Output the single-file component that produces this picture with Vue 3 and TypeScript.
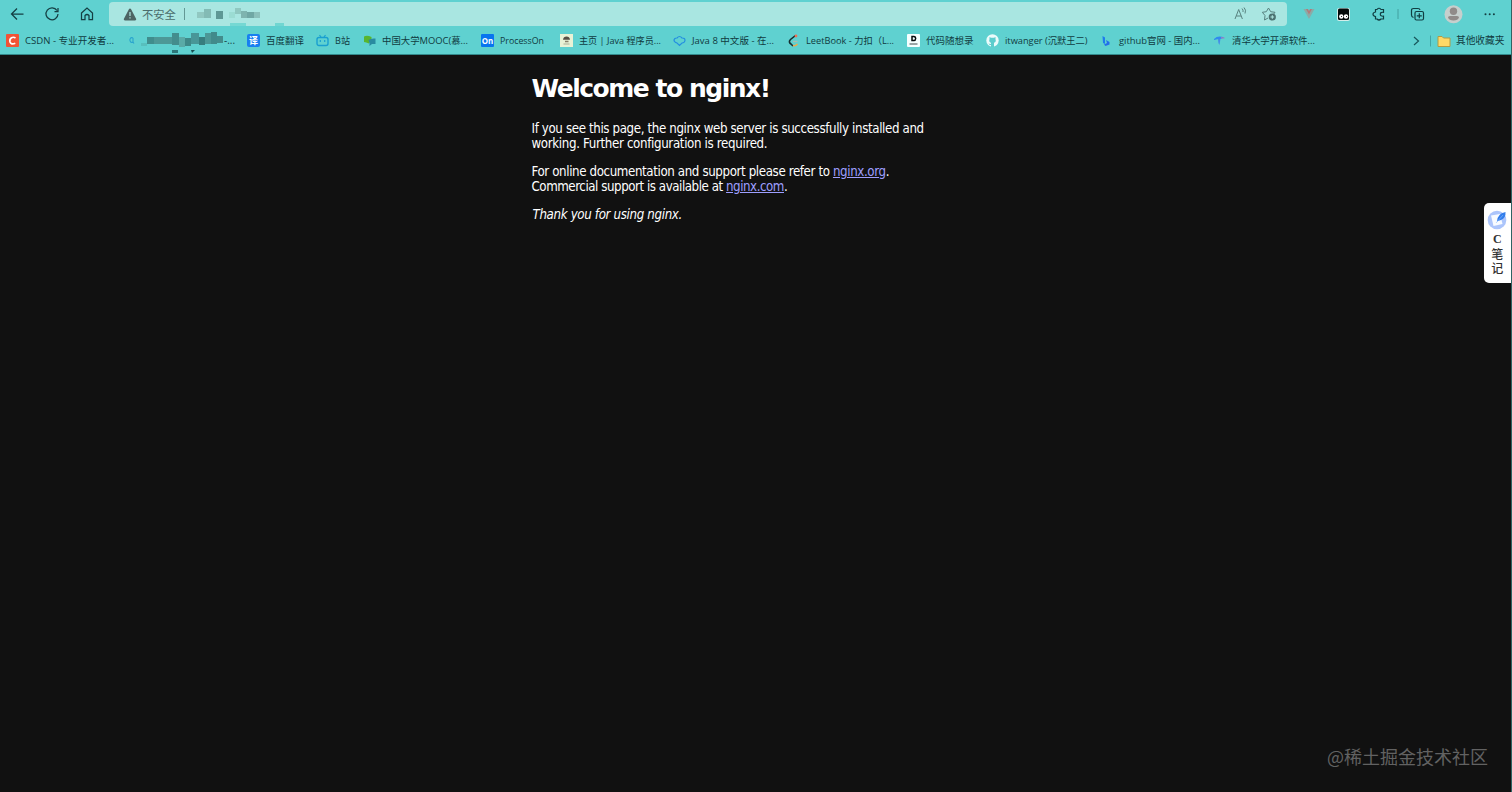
<script setup lang="ts">
interface Bookmark {
  icon: string
  label: string
  start: number
  end: number
  text: number
}

const bookmarks: Bookmark[] = [
  { icon: 'csdn', label: 'CSDN - 专业开发者...', start: 6, end: 127, text: 89 },
  { icon: 'search', label: '', start: 127, end: 247, text: 89 },
  { icon: 'fanyi', label: '百度翻译', start: 247, end: 316, text: 38 },
  { icon: 'bili', label: 'B站', start: 316, end: 363, text: 15 },
  { icon: 'mooc', label: '中国大学MOOC(慕...', start: 363, end: 480.5, text: 86 },
  { icon: 'on', label: 'ProcessOn', start: 480.5, end: 559.5, text: 44 },
  { icon: 'java', label: '主页 | Java 程序员...', start: 559.5, end: 673, text: 82 },
  { icon: 'cloud', label: 'Java 8 中文版 - 在...', start: 673, end: 787, text: 82 },
  { icon: 'leet', label: 'LeetBook - 力扣（L...', start: 787, end: 906.5, text: 88 },
  { icon: 'dai', label: '代码随想录', start: 906.5, end: 985.5, text: 47.5 },
  { icon: 'github', label: 'itwanger (沉默王二)', start: 985.5, end: 1100, text: 82.5 },
  { icon: 'bing', label: 'github官网 - 国内...', start: 1100, end: 1212.5, text: 81 },
  { icon: 'tuna', label: '清华大学开源软件...', start: 1212.5, end: 1330, text: 83 },
]

const urlBlocks = [
  [197, 12, 7, 6, '#91c8c1'], [204, 9, 7, 9, '#83bbb5'], [216, 11, 7, 8, '#5e9895'],
  [229, 12, 6, 6, '#9bdcd3'], [235, 8, 6, 6, '#8fc8c1'], [241, 11, 6, 7, '#7eb4af'],
  [247, 12, 7, 6, '#70a7a4'], [254, 12, 6, 6, '#8bc0bb'], [230, 23, 16, 3, '#75d8d3'], [275, 23, 9, 3, '#70d6d1'],
]
const nameBlocks = [
  [141, 43, 6, 3, '#58bfbd'], [147, 37, 7, 7, '#408d8d'], [154, 37, 18, 7, '#4d9897'], [172, 33, 7, 12, '#438d8d'],
  [179, 37, 6, 10, '#5aaaa7'], [185, 38, 6, 8, '#3e8888'], [191, 33, 8, 11, '#489697'],
  [199, 37, 6, 8, '#377d7e'], [205, 33, 6, 11, '#4c9796'], [211, 32, 6, 12, '#418a8b'],
  [217, 36, 6, 7, '#438c8c'], [172, 50, 6, 3, '#2d7679'],
]
</script>

<template>
  <div class="browser">
    <header>
      <nav class="toolbar">
        <svg class="nav-icons" width="109" height="28" viewBox="0 0 109 28">
          <path d="M23.500 14H11.500M17 8.500L11.500 14L17 19.500" />
          <path d="M57 10.500A6 6 0 1 0 58 14M58 8V11.500H54.500" />
          <path d="M81.500 13L87 8L92.500 13V19.500H89V15.500Q87 13.500 85 15.500V19.500H81.500Z" />
        </svg>
        <div class="address">
          <svg class="warning" width="14" height="13" viewBox="0 0 14 13">
            <path d="M7 .5Q7.700.5 8.100 1.300L13.200 11Q13.500 12.400 12 12.500H2Q.5 12.400.8 11L5.900 1.300Q6.300.5 7 .5Z" fill="#4d6463" />
            <path d="M7 4V8M7 9.300V10.500" stroke="#b4e7e1" stroke-width="1.200" />
          </svg>
          <span class="unsafe">不安全</span>
          <i class="address-line"></i>
          <svg class="address-actions" width="50" height="24" viewBox="1232 2 50 24" fill="none" stroke="#58827f">
            <path d="M1235 19L1238.700 9.500L1242.400 19M1236.300 16H1241.100M1242 8.500Q1243.500 10 1243 12M1244 7.500Q1246.500 10 1245 13.500" />
            <path d="M1268 18L1264.500 20L1265 15.500L1262.300 12.300L1266.300 11.700L1268.500 8L1270.700 11.700L1275 12.300L1273.700 14" />
            <circle cx="1272.300" cy="17" r="3.600" fill="#4b7270" stroke="none" />
            <path d="M1270.500 17H1274.100M1272.300 15.200V18.800" stroke="#b0e8e2" />
          </svg>
        </div>
        <svg class="extensions" width="225" height="28" viewBox="1287 0 225 28" fill="none" stroke="#113e42" stroke-width="1.200">
          <path d="M1303.500 9H1307L1309 13L1311 9H1314.500L1309 19Z" fill="#8caaa7" stroke="none" />
          <path d="M1306 9H1308L1309 11L1310 9H1312L1309 14.500Z" fill="#b27b7b" stroke="none" />
          <rect x="1337" y="8" width="13" height="13" rx="2" fill="#d5eeea" stroke="none" />
          <rect x="1338" y="8.500" width="11" height="11.500" rx="1.500" fill="#020909" stroke="none" />
          <circle cx="1341.300" cy="16.500" r="2.200" fill="#fff" stroke="none" /><circle cx="1346" cy="16.500" r="2.200" fill="#fff" stroke="none" />
          <path d="M1341 16.500H1342M1346 16.500H1347" stroke="#333" />
          <path d="M1375.500 9.500H1377Q1379 7 1381 9.500H1383.500V12.300Q1380.300 12 1380.300 14.200Q1380.300 16.500 1383.500 16.200V19H1381Q1379 21 1377 19H1375.500V16.500Q1373 16 1373 14.200Q1373 12.500 1375.500 12Z" />
          <path d="M1398 9V19" stroke="#47a8a8" />
          <rect x="1415" y="11.500" width="8.500" height="8.500" rx="1.500" /><path d="M1413.500 17.500Q1411.500 17 1411.500 15V10.500Q1411.500 8.500 1413.500 8.500H1418Q1419.800 8.500 1420 10M1416.800 15.800H1421.800M1419.300 13.300V18.300" />
          <circle cx="1453.500" cy="14.300" r="9" fill="#c6cfcd" stroke="none" />
          <circle cx="1453.500" cy="11.300" r="3.700" fill="#908b89" stroke="none" /><path d="M1448 17.500Q1448 16 1450 16H1457Q1459 16 1459 17.500Q1458 20.500 1453.500 20.500Q1449 20.500 1448 17.500Z" fill="#908b89" stroke="none" />
          <g fill="#143d40" stroke="none"><circle cx="1485.500" cy="14.300" r="1" /><circle cx="1489.700" cy="14.300" r="1" /><circle cx="1493.900" cy="14.300" r="1" /></g>
        </svg>
      </nav>

      <nav class="bookmarks">
        <div v-for="item in bookmarks" :key="item.icon" class="bookmark" :style="{ width: `${item.end - item.start}px` }">
          <svg width="13" height="13" viewBox="0 0 13 13" fill="none">
            <template v-if="item.icon === 'csdn'"><rect width="13" height="13" rx="1" fill="#f15336" /><path d="M9.500 4Q7.500 2.700 5.500 3.700Q3.300 5 4 8Q5 11 9.300 9.300" stroke="#fff" stroke-width="1.700" /></template>
            <template v-else-if="item.icon === 'search'"><path d="M6 4A2 2.400 0 1 0 6 8M6 4V8L7 9.500" stroke="#2aa5ce" stroke-width="1.100" /></template>
            <template v-else-if="item.icon === 'fanyi'"><rect width="13" height="13" rx="2" fill="#187ff0" /><text x="2" y="10" font-size="9" font-weight="700" fill="#fff">译</text></template>
            <template v-else-if="item.icon === 'bili'"><rect x="1" y="3.500" width="11" height="8" rx="2" stroke="#199fd0" stroke-width="1.400" /><path d="M3.500 1L5 3M9.500 1L8 3M4.300 6V8M8.700 6V8" stroke="#199fd0" stroke-width="1.200" /></template>
            <template v-else-if="item.icon === 'mooc'"><path d="M1 2.500Q4 1 8.500 3V7Q6 8 6 9.500Q3 8 1 8Z" fill="#58b52e" /><path d="M5.500 6Q8 4 12.500 4.500V10H9L6.500 12V9Z" fill="#298ba0" /></template>
            <template v-else-if="item.icon === 'on'"><rect width="13" height="13" rx="1" fill="#0875ef" /><text x=".8" y="9.800" font-size="8.500" font-weight="700" textLength="11.500" lengthAdjust="spacingAndGlyphs" fill="#fff">On</text></template>
            <template v-else-if="item.icon === 'java'"><rect width="13" height="13" fill="#e9f2d6" /><path d="M3 5.800Q3.500 2.500 6.500 2.500Q9.500 2.500 10 5.800Z" fill="#564e45" /><path d="M5 7.500H8.500" stroke="#857e69" stroke-width="1.500" /><path d="M3.500 10H9.500" stroke="#a9ad96" /></template>
            <template v-else-if="item.icon === 'cloud'"><path d="M4 9Q1 8 1 6Q1.500 3.800 4 4Q6.500 1 9 4Q12 3.800 12 6.500Q11.500 9 9 9L6.500 11.500L4 9Z" stroke="#248fe0" stroke-width="1.200" /></template>
            <template v-else-if="item.icon === 'leet'"><path d="M8.500 1.500L3.500 5.500Q1 8 4 10L6 12" stroke="#152e30" stroke-width="1.600" /><path d="M6 11.500Q8.500 12.500 10.500 10" stroke="#eba94d" stroke-width="1.500" /><path d="M6 7.500H10.500" stroke="#a8bcb3" stroke-width="1.300" /><circle cx="9" cy="2" r="1.400" fill="#eb6f54" /></template>
            <template v-else-if="item.icon === 'dai'"><rect width="13" height="13" rx="1" fill="#f5ffff" /><path d="M5 2.500H7Q8.700 2.700 8.700 4.500Q8.500 6.500 7 6.500H5Z" stroke="#050b0c" stroke-width="1.500" /><path d="M2.500 10H10.500" stroke="#3f4b4c" /></template>
            <template v-else-if="item.icon === 'github'"><circle cx="6.500" cy="6.500" r="6.200" fill="#ecfbfb" /><path d="M3.500 3L5 3.700H8L9.500 3V5.300Q10.500 8 8 8.800V13H5V11Q3.500 11.300 2.500 9.500Q4 10.300 5 9.800V8.800Q2.500 8 3.500 5.300Z" fill="#5dcdcd" /></template>
            <template v-else-if="item.icon === 'bing'"><path d="M2.500 2L5 3.500V10L3 9Z" fill="#1e7ced" /><path d="M6 6L9.500 8V10.500L5.500 12L4 10.500L7 9Z" fill="#246ee9" /></template>
            <template v-else><path d="M1 5Q5 1 11 3.500L7.500 5Q4 5 1 6Z" fill="#308aef" /><path d="M5 5L7.500 4.500L6.500 11Q5 9 5 5Z" fill="#438be9" /><path d="M8 3L11.500 3.500V4.500H8Z" fill="#967fc2" /></template>
          </svg>
          <svg v-if="item.label" class="label" :width="item.text" height="15"><text x="0" y="10.500" :textLength="item.text" lengthAdjust="spacingAndGlyphs">{{ item.label }}</text></svg>
          <span v-else class="masked-end">-...</span>
        </div>
        <div class="other">
          <svg width="48" height="20" viewBox="1408 30.500 48 20" fill="none"><path d="M1414 36.500L1418.500 40.500L1414 44.500" stroke="#18565a" stroke-width="1.200" /><path d="M1430.500 35V46" stroke="#43a6a6" /><path d="M1438 36H1442L1443.500 37.500H1450V46H1438Z" fill="#ffd967" stroke="#b29b43" /></svg>
          <span>其他收藏夹</span>
        </div>
      </nav>
      <svg class="mosaic" width="300" height="55">
        <rect v-for="(b, i) in [...urlBlocks, ...nameBlocks]" :key="i" :x="b[0]" :y="b[1]" :width="b[2]" :height="b[3]" :fill="String(b[4])" />
        <path d="M191 50H195L192 53Z" fill="#174d51" />
      </svg>
    </header>

    <main>
      <h1>Welcome to nginx!</h1>
      <p><span class="intro">If you see this page, the nginx web server is successfully installed and</span><br><span class="further">working. Further configuration is required.</span></p>
      <p><span class="docs">For online documentation and support please refer to <a href="#">nginx.org</a>.</span><br><span class="commercial">Commercial support is available at <a href="#">nginx.com</a>.</span></p>
      <p><em>Thank you for using nginx.</em></p>
    </main>

    <aside>
      <svg width="20" height="20" viewBox="0 0 20 20"><circle cx="10" cy="10" r="9.300" fill="#acc5fb" /><path d="M4 5.500L13 4L15.500 14L6.500 16Z" fill="#f8fbff" /><path d="M10 11.500Q10 4 18.500 2Q19 8 14 10L11 11Z" fill="#327deb" /><path d="M9 13L16 5" stroke="#8cbcff" stroke-width=".6" /></svg>
      <span class="letter">C</span><span>笔</span><span>记</span>
    </aside>
    <div class="watermark">@稀土掘金技术社区</div>
  </div>
</template>

<style>
body { margin: 0; background: #111; }
</style>

<style scoped>
.browser { position: relative; width: 1512px; height: 792px; box-sizing: border-box; overflow: hidden; background: #111; border-right: 1px solid #2d6464; font-family: "Open Sans", "Noto Sans CJK SC", sans-serif; }
header { position: relative; width: 1512px; height: 55px; background: #5fd1d0; box-sizing: border-box; border-bottom: 1px solid #32898b; }
.toolbar { display: flex; height: 28px; }
.nav-icons { flex: none; fill: none; stroke: #153f43; stroke-width: 1.25; }
.address { display: flex; align-items: center; width: 1178px; height: 24px; margin-top: 2px; background: #a9e6e1; border-radius: 4px; }
.warning { margin-left: 14px; }
.unsafe { margin-left: 5px; width: 36px; color: #496c6b; font: 11.3px "Noto Sans CJK SC", sans-serif; white-space: nowrap; }
.address-line { width: 1px; height: 12px; margin-left: 6px; background: #639895; }
.address-actions { margin-left: auto; margin-right: 5px; }
.extensions { flex: none; }
.bookmarks { display: flex; height: 26px; padding-left: 6px; }
.bookmark { display: flex; align-items: center; flex: none; gap: 6px; height: 25px; }
.bookmark > svg { flex: none; }
.label { overflow: visible; fill: #103b40; font-size: 9.6px; }
.masked-end { margin-left: 78px; font-size: 10px; line-height: 13px; color: #18464a; }
.other { display: flex; align-items: center; width: 104px; height: 25px; margin-left: 78px; font-size: 9.7px; line-height: 12px; color: #103b40; white-space: nowrap; }
.mosaic { position: absolute; left: 0; top: 0; }
main { width: 448px; margin: 0 auto; padding-top: 17px; color: #fff; font: 13.2px/15px "DejaVu Sans Condensed", "DejaVu Sans", sans-serif; font-stretch: condensed; }
h1 { margin: 0 0 16px; font-family: "DejaVu Sans", sans-serif; font-stretch: normal; font-size: 25px; line-height: 33px; letter-spacing: -1.48px; }
p { margin: 0 0 13px; white-space: nowrap; }
.intro { letter-spacing: -.37px; }
.further { letter-spacing: -.34px; }
.docs { letter-spacing: -.38px; }
.commercial { letter-spacing: -.45px; }
em { letter-spacing: -.34px; margin-left: 1px; }
a { color: #9e9eff; }
aside { position: absolute; right: 0; top: 203px; width: 27.5px; height: 80px; box-sizing: border-box; padding-top: 7px; display: flex; flex-direction: column; align-items: center; background: #fff; border-radius: 5px 0 0 5px; color: #333; font: 500 12px/14.5px "Noto Sans CJK SC", sans-serif; }
aside svg { flex: none; margin-bottom: 2px; }
.letter { font-family: "Liberation Serif", serif; font-weight: 700; }
.watermark { position: absolute; left: 1327px; top: 743px; color: #626262; font: 18px/26px "Noto Sans CJK SC", sans-serif; white-space: nowrap; }
</style>
